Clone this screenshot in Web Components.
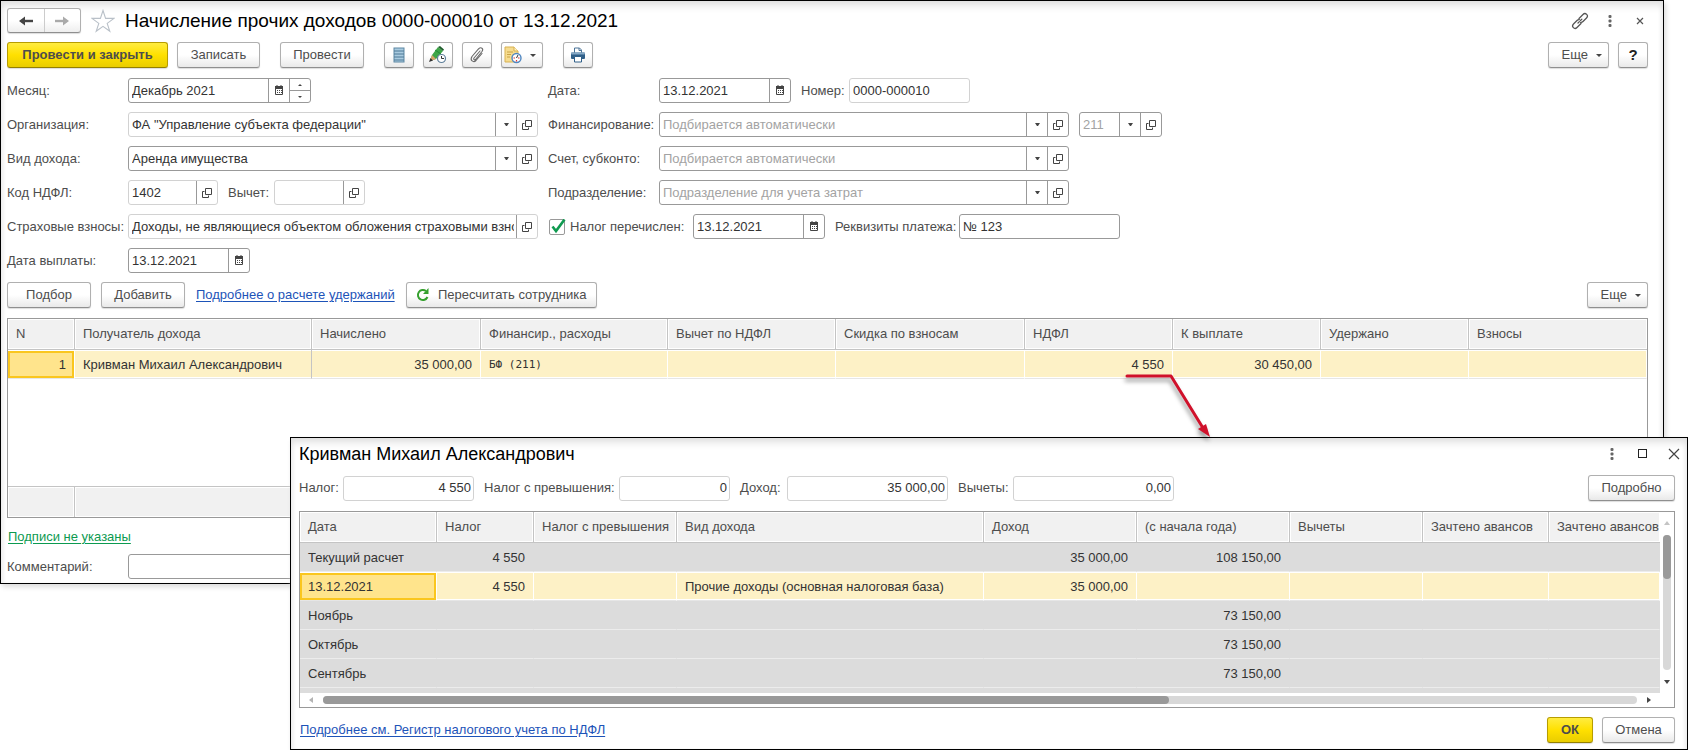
<!DOCTYPE html>
<html lang="ru">
<head>
<meta charset="utf-8">
<title>Начисление прочих доходов</title>
<style>
html,body{margin:0;background:#fff}
body{font:13px/16px "Liberation Sans",Arial,sans-serif;color:#4d4d4d}
</style>
</head>
<body>
<income-page></income-page>
<script>
const ICONS = {
  back: [20,14,'<path d="M5 7h12" stroke="#444" stroke-width="2.400"/><path d="M3 7l6-4.500v9z" fill="#444"/>'],
  forward: [20,14,'<path d="M3 7h12" stroke="#aaa" stroke-width="2.400"/><path d="M17 7l-6-4.500v9z" fill="#aaa"/>'],
  star: [24,24,'<path d="M12 1.500l2.600 7.900h8.400l-6.800 5 2.600 7.900-6.800-4.900-6.800 4.900 2.600-7.900L1 9.400h8.400z" fill="#fff" stroke="#b9c0c8" stroke-width="1.100"/>'],
  link: [18,18,'<g fill="none" stroke="#555" stroke-width="1.300" stroke-linecap="round"><path d="M8 6.500l4-4c2.500-2.500 6 1 3.500 3.500l-3.500 3.500c-.8.800-1.500 1-2.300.9"/><path d="M10 11.500l-4 4c-2.500 2.500-6-1-3.500-3.500L6 8.500c.8-.8 1.500-1 2.300-.9"/><path d="M7 11l4-4" stroke-dasharray="2 1.500"/></g>'],
  dots: [4,12,'<g fill="#666"><rect x=".5" width="3" height="3" rx="1"/><rect x=".5" y="4.500" width="3" height="3" rx="1"/><rect x=".5" y="9" width="3" height="3" rx="1"/></g>'],
  close: [8,8,'<path d="M1 1l6 6M7 1L1 7" stroke="#555" stroke-width="1.200"/>'],
  closeBig: [12,12,'<path d="M1 1l10 10M11 1L1 11" stroke="#444" stroke-width="1.200"/>'],
  max: [9,9,'<rect x=".5" y=".5" width="8" height="8" fill="none" stroke="#222"/>'],
  list: [12,16,'<rect x="1" y="1" width="10" height="14" fill="#a9cbe0" stroke="#5c87a3"/><path d="M1 4h10M1 7h10M1 10h10M1 13h10" stroke="#4d7896"/>'],
  pencil: [18,18,'<path d="M1 15l2-6L9 1l5 4-7 8z" fill="#3fa648"/><path d="M9 1l2-1 4 3.500L14 5z" fill="#1e5c2b"/><path d="M1 15l2-6 4 4z" fill="#d9a36b"/><path d="M0 16l1.500-4L4 14.500z" fill="#333"/><path d="M6 4l6 4" stroke="#25883a"/><circle cx="12.500" cy="12.500" r="4" fill="#fff" stroke="#5e7f99" stroke-width="1.200"/><path d="M12.500 10v2.500H15" fill="none" stroke="#333"/>'],
  clip: [16,18,'<path d="M11 5l-6 7c-1 1.500.5 2.500 1.500 1.500l6.500-8C15 2.500 12 .5 9.500 3L3 10.500c-2.500 4 1.500 6.500 4 4l6-7" fill="none" stroke="#6a6a6a" stroke-width="1.100" stroke-linecap="round"/>'],
  clockDoc: [18,18,'<path d="M1 1h9l4 4v11H1z" fill="#f6dc8f" stroke="#d7b152"/><path d="M10 1v4h4" fill="#fff2c4" stroke="#d7b152"/><path d="M3 6h6M3 8.500h4M3 11h3" stroke="#caa447"/><circle cx="12.500" cy="12" r="4.500" fill="#fff" stroke="#4f86c0" stroke-width="1.400"/><path d="M12.500 12l1.500-3" stroke="#333"/><path d="M9.500 12h1.500M14 12h1.500M12.500 14v1.500" stroke="#d33" stroke-width="1.200"/>'],
  print: [16,16,'<path d="M4.500 6V1h5l2 2v3" fill="#fff" stroke="#4a7397"/><path d="M9 1v2.500h2.500" fill="none" stroke="#4a7397"/><rect x="1" y="5.500" width="14" height="6.500" rx="1" fill="#2f5f88"/><rect x="1" y="5.500" width="14" height="2" rx="1" fill="#86a9c6"/><path d="M4.500 9.500h7v5.500h-7z" fill="#fff" stroke="#2f5f88"/>'],
  refresh: [14,14,'<path d="M10 3A5 5 0 1 0 11.500 9" fill="none" stroke="#35a02e" stroke-width="2"/><path d="M12.500 0v6H7z" fill="#35a02e"/>'],
  down: [6,3,'<path d="M0 0h6L3 3z" fill="#444"/>'],
  calendar: [10,11,'<path d="M1.500 2.500h7v7h-7z" fill="#fff" stroke="#444"/><path d="M1 1h8v3H1z" fill="#444"/><path d="M3 0v1M7 0v1" stroke="#444"/><path d="M3 5.500h5M3 7.500h5" stroke="#444" stroke-dasharray="1 1"/>'],
  open: [10,10,'<path d="M3.500.5h6v6h-6z" fill="none" stroke="#444"/><path d="M2.500 3.500h-2v6h6v-2" fill="none" stroke="#444"/>'],
  drop: [5,3,'<path d="M0 0h5L3 3H2z" fill="#444"/>'],
  up: [4,2,'<path d="M0 2h4L2 0z" fill="#444"/>'],
  dn: [4,2,'<path d="M0 0h4L2 2z" fill="#444"/>'],
  check: [16,16,'<path d="M2.500 7.500L6 12 14.500.5" fill="none" stroke="#109a50" stroke-width="2.600"/>'],
  sUp: [6,4,'<path d="M0 4h6L3 0z" fill="#c4c4c4"/>'],
  sDown: [6,4,'<path d="M0 0h6L3 4z" fill="#444"/>'],
  sLeft: [4,6,'<path d="M4 0v6L0 3z" fill="#b4b4b4"/>'],
  sRight: [4,6,'<path d="M0 0v6l4-3z" fill="#444"/>']
};
const svg = name => {
  const [w,h,body] = ICONS[name];
  return `<svg width="${w}" height="${h}" viewBox="0 0 ${w} ${h}" aria-hidden="true">${body}</svg>`;
};
const define = (tag, render) => customElements.define(tag, class extends HTMLElement {
  connectedCallback() {
    if (this.shadowRoot) return;
    this.attachShadow({mode:'open'}).innerHTML = '<style>*{box-sizing:border-box}svg{display:block;flex:none}</style>' + render(this);
  }
});
const attr = (el, name, fallback='') => el.getAttribute(name) ?? fallback;

define('ui-icon', el => `<style>:host{display:flex;justify-content:center}</style>${svg(attr(el,'name'))}`);

define('ui-button', el => {
  const icon = attr(el,'icon'), menu = el.hasAttribute('menu');
  return `<style>
  :host{display:block;flex:none;width:${attr(el,'width')}px}
  button{display:flex;align-items:center;justify-content:center;gap:8px;width:100%;height:26px;padding:0;
    border:1px solid #b0b0b0;border-bottom-color:#8f8f8f;border-radius:3px;
    background:linear-gradient(#fff 50%,#e9e9e9);box-shadow:0 1px 1px #ddd;font:inherit;color:#4d4d4d;white-space:nowrap}
  :host([menu]) button{justify-content:flex-end;padding-right:6px}
  :host([primary]) button{font-weight:bold;border-color:#b79d00;border-bottom-color:#948000;background:linear-gradient(#ffec40,#ffe000 50%,#e9cd00)}
  :host([strong]) button{font-size:15px;font-weight:bold;color:#222}
  </style><button type="button" ${icon&&!el.textContent?`aria-label="${attr(el,'hint')}"`:''}>${icon?svg(icon):''}<slot></slot>${menu?svg('down'):''}</button>`;
});

define('nav-buttons', () => `<style>
  :host{display:flex;width:74px;height:25px;border:1px solid #b0b0b0;border-bottom-color:#8f8f8f;border-radius:3px;background:linear-gradient(#fff 50%,#eee);box-shadow:0 1px 1px #ddd;box-sizing:border-box}
  button{flex:1;display:flex;align-items:center;justify-content:center;border:0;background:none;padding:0}
  button+button{border-left:1px solid #ccc}
  </style><button type="button" aria-label="Назад">${svg('back')}</button><button type="button" aria-label="Вперед">${svg('forward')}</button>`);

define('ui-link', el => `<style>
  :host{display:block;white-space:nowrap}
  a{color:#1d53b8;text-decoration:underline;text-underline-offset:2px}
  :host([green]) a{color:#0c9a50}
  </style><a href="#"><slot></slot></a>`);

define('ui-field', el => {
  const hints = {calendar:'Выбрать дату',open:'Открыть',drop:'Выбрать'};
  const acts = attr(el,'actions').split(' ').filter(Boolean).map(a => a === 'spin'
    ? `<span class="spin"><button type="button" aria-label="Больше">${svg('up')}</button><button type="button" aria-label="Меньше">${svg('dn')}</button></span>`
    : `<button type="button" aria-label="${hints[a]}">${svg(a)}</button>`).join('');
  const w = attr(el,'width');
  const check = el.hasAttribute('check');
  return `<style>
  :host{display:flex;align-items:center;height:25px;${w?'flex:none':'flex:1'}}
  label{flex:none;width:${attr(el,'label-width')}px;white-space:nowrap}
  .tick{position:relative;width:16px;height:16px;margin:0 5px 0 1px;flex:none}
  .tick input{appearance:none;display:block;width:16px;height:16px;margin:0;border:1px solid #999;border-radius:2px;background:#fff}
  .tick svg{position:absolute;left:1px;top:0;pointer-events:none}
  .box{display:flex;${w?`width:${w}px`:'flex:1'};height:25px;border:1px solid #999;border-radius:3px;background:#fff;overflow:hidden}
  :host([muted]) .box{border-color:#d2d2d2}
  .box>input{flex:1;min-width:0;border:0;outline:0;background:none;padding:0 2px 0 3px;font:inherit;color:#333}
  :host([num]) .box>input{text-align:right}
  input::placeholder{color:#a3a3a3;opacity:1}
  button{flex:none;width:21px;display:flex;align-items:center;justify-content:center;border:0;border-left:1px solid #999;background:none;padding:0}
  .spin{display:flex;flex-direction:column;width:21px;border-left:1px solid #999}
  .spin button{flex:1;width:100%;border:0}
  .spin button+button{border-top:1px solid #999}
  </style>${check?`<span class="tick"><input type="checkbox" id="t" checked>${svg('check')}</span>`:''}<label for="${check?'t':'f'}">${attr(el,'label')}</label>
  <span class="box"><input id="f" type="text" ${attr(el,'label')&&!check?'':`aria-label="${attr(el,'hint')}"`} value="${attr(el,'value').replace(/"/g,'&quot;')}" placeholder="${attr(el,'placeholder')}">${acts}</span>`;
});

define('callout-arrow', () => `<style>
  :host{position:absolute;right:-45px;top:18px;width:92px;height:72px;z-index:3;pointer-events:none}
  svg{overflow:visible;filter:drop-shadow(-1px 4px 2px #0006)}
  </style><svg width="92" height="72" viewBox="0 0 92 72"><path d="M2 8H46L78 60" fill="none" stroke="#d0112b" stroke-width="3" stroke-linejoin="round" stroke-linecap="round"/><path d="M85 69l-12-8 8-5z" fill="#d0112b"/></svg>`);

/* Columns and rows of each data-grid, by its name. Prefix ">" aligns right, "=" sets monospace. */
const GRIDS = {
  income: {
    cols: [['N',67],['Получатель дохода',237],['Начислено',169],['Финансир., расходы',187],['Вычет по НДФЛ',168],['Скидка по взносам',189],['НДФЛ',148],['К выплате',148],['Удержано',148],['Взносы','']],
    rows: [['active',['>1','Кривман Михаил Александрович','>35 000,00','=БФ (211)','','','>4 550<callout-arrow></callout-arrow>','>30 450,00','','']]],
    footer: true
  },
  tax: {
    cols: [['Дата',137],['Налог',97],['Налог с превышения',143],['Вид дохода',307],['Доход',153],['(с начала года)',153],['Вычеты',133],['Зачтено авансов',126],['Зачтено авансов','']],
    rows: [
      ['group',['Текущий расчет','>4 550','','','>35 000,00','>108 150,00','','','']],
      ['active',['13.12.2021','>4 550','','Прочие доходы (основная налоговая база)','>35 000,00','','','','']],
      ['group',['Ноябрь','','','','','>73 150,00','','','']],
      ['group',['Октябрь','','','','','>73 150,00','','','']],
      ['group',['Сентябрь','','','','','>73 150,00','','','']],
      ['group',['','','','','','','','','']]
    ]
  }
};
define('data-grid', el => {
  const g = GRIDS[attr(el,'name')];
  const cell = t => t[0]==='>' ? `<td class="r">${t.slice(1)}</td>` : t[0]==='=' ? `<td class="m">${t.slice(1)}</td>` : `<td>${t}</td>`;
  return `<style>
  :host{display:block;border:1px solid #999;box-sizing:border-box}
  table{width:100%;table-layout:fixed;border-collapse:separate;border-spacing:0}
  :host([name=income]) table{height:198px}
  th,td{padding:0 8px;text-align:left;font-weight:normal;white-space:nowrap;overflow:hidden}
  th{height:31px;padding-right:0;background:#f1f1f1;border-right:1px solid #c4c4c4;border-bottom:1px solid #c4c4c4;box-shadow:inset 0 0 0 1px #fff}
  th:last-child{border-right:0}
  td{position:relative;overflow:visible}
  .r{text-align:right}
  .m{font:11px/16px "DejaVu Sans Mono",monospace}
  tr.active td,tr.group td{height:29px;padding-top:2px;color:#333}
  tr.group td{background:#dcdcdc;border-right:1px solid #dcdcdc;border-bottom:1px solid #ececec}
  tr.active td{background:#fdf1c6;border-right:1px solid #fff;border-bottom:1px solid #e6e6e6;box-shadow:inset 0 1px #fff,inset 0 -1px #fff}
  :host([name=income]) tr.active td:nth-child(2){border-right-color:#c4c4c4}
  tr.active td:first-child{background:#ffe48c;box-shadow:inset 0 1px #fff,inset 2px 0 #fac61e,inset -2px 0 #fac61e,inset 0 3px #fac61e,inset 0 -2px #fac61e}
  tr.fill td{height:auto}
  tfoot td{height:31px;background:#f1f1f1;border-top:1px solid #c4c4c4;border-right:1px solid #c4c4c4;box-shadow:inset 0 0 0 1px #fff}
  tfoot td:last-child{border-right:0}
  .view{display:flex}
  .port{flex:1;min-width:0;height:181px;overflow:hidden}
  .vbar{width:14px;display:flex;flex-direction:column;align-items:center;padding:9px 0}
  .vtrack{width:8px;flex:1;margin:10px 0;border-radius:4px;background:#d8d8d8}
  .vthumb{height:44px;border-radius:4px;background:#999}
  .hbar{height:14px;display:flex;align-items:center;padding:0 23px 0 9px}
  .htrack{height:8px;flex:1;margin:0 10px;border-radius:4px;background:#d8d8d8}
  .hthumb{width:64.4%;height:8px;border-radius:4px;background:#999}
  </style>
  ${g.footer?'':'<div class="view"><div class="port">'}
  <table><colgroup>${g.cols.map(c=>`<col${c[1]?` style="width:${c[1]}px"`:''}>`).join('')}</colgroup>
  <thead><tr>${g.cols.map(c=>`<th scope="col">${c[0]}</th>`).join('')}</tr></thead>
  <tbody>${g.rows.map(([k,r])=>`<tr class="${k}">${r.map(cell).join('')}</tr>`).join('')}
  ${g.footer?`<tr class="fill"><td colspan="${g.cols.length}"></td></tr>`:''}</tbody>
  ${g.footer?`<tfoot><tr>${g.cols.map(()=>'<td></td>').join('')}</tr></tfoot>`:''}</table>
  ${g.footer?'':`</div><div class="vbar">${svg('sUp')}<div class="vtrack"><div class="vthumb"></div></div>${svg('sDown')}</div></div>
  <div class="hbar">${svg('sLeft')}<div class="htrack"><div class="hthumb"></div></div>${svg('sRight')}</div>`}`;
});

define('app-window', () => `<style>
  :host{display:block;box-sizing:border-box;border:1px solid #000;background:#fff;box-shadow:inset 0 8px 8px -4px #ddd,inset 4px 0 4px -2px #eee,inset -4px 0 4px -2px #eee,2px 3px 5px #ddd}
  header{display:flex;align-items:center;gap:10px;height:25px}
  h1{margin:0;font-size:var(--title-size,19px);line-height:24px;font-weight:normal;color:#000;white-space:nowrap}
  .tools{margin-left:auto;display:flex;align-items:center}
  </style><header><slot name="lead"></slot><h1><slot name="title"></slot></h1><div class="tools"><slot name="tools"></slot></div></header><slot></slot>`);

define('income-document', () => `<style>
  :host{display:block}
  app-window{padding:7px 15px 4px 6px}
  .bar{display:flex;align-items:center;gap:9px}
  .top{margin:9px 0 10px}
  .push{margin-left:auto}
  .gap{margin-left:11px}
  .tools{display:flex;align-items:center;margin-right:-7px}
  .tools ui-icon{width:30px}
  .form{display:grid;grid-template-columns:531px 1fr;column-gap:10px;row-gap:9px}
  .row{display:flex;gap:10px}
  .cmd{margin:9px 0 10px;gap:10px}
  .cmd ui-link{margin:0 1px}
  .sign{margin:11px 0 9px 1px}
  </style>
  <app-window>
    <nav-buttons slot="lead"></nav-buttons><ui-icon slot="lead" name="star"></ui-icon>
    <span slot="title">Начисление прочих доходов 0000-000010 от 13.12.2021</span>
    <div slot="tools" class="tools"><ui-icon name="link"></ui-icon><ui-icon name="dots"></ui-icon><ui-icon name="close"></ui-icon></div>
    <div class="bar top">
      <ui-button width="161" primary>Провести и закрыть</ui-button><ui-button width="83">Записать</ui-button>
      <ui-button width="84" class="gap">Провести</ui-button>
      <ui-button width="30" icon="list" hint="Проводки" class="gap"></ui-button><ui-button width="30" icon="pencil" hint="Изменить"></ui-button>
      <ui-button width="30" icon="clip" hint="Файлы"></ui-button><ui-button width="42" icon="clockDoc" hint="Создать на основании" menu></ui-button>
      <ui-button width="30" icon="print" hint="Печать" class="gap"></ui-button>
      <ui-button width="61" menu class="push">Еще</ui-button><ui-button width="30" strong>?</ui-button>
    </div>
    <div class="form">
      <div class="row"><ui-field label="Месяц:" label-width="121" width="183" value="Декабрь 2021" actions="calendar spin"></ui-field></div>
      <div class="row"><ui-field label="Дата:" label-width="111" width="132" value="13.12.2021" actions="calendar"></ui-field><ui-field label="Номер:" label-width="48" width="121" value="0000-000010" muted></ui-field></div>
      <div class="row"><ui-field label="Организация:" label-width="121" value='ФА "Управление субъекта федерации"' actions="drop open" muted></ui-field></div>
      <div class="row"><ui-field label="Финансирование:" label-width="111" width="410" placeholder="Подбирается автоматически" actions="drop open"></ui-field><ui-field label-width="0" width="83" hint="Расходы" placeholder="211" actions="drop open"></ui-field></div>
      <div class="row"><ui-field label="Вид дохода:" label-width="121" value="Аренда имущества" actions="drop open"></ui-field></div>
      <div class="row"><ui-field label="Счет, субконто:" label-width="111" width="410" placeholder="Подбирается автоматически" actions="drop open"></ui-field></div>
      <div class="row"><ui-field label="Код НДФЛ:" label-width="121" width="90" value="1402" actions="open" muted></ui-field><ui-field label="Вычет:" label-width="46" width="91" actions="open" muted></ui-field></div>
      <div class="row"><ui-field label="Подразделение:" label-width="111" width="410" placeholder="Подразделение для учета затрат" actions="drop open"></ui-field></div>
      <div class="row"><ui-field label="Страховые взносы:" label-width="121" value="Доходы, не являющиеся объектом обложения страховыми взносами" actions="open" muted></ui-field></div>
      <div class="row"><ui-field check label="Налог перечислен:" label-width="123" width="132" hint="Дата перечисления" value="13.12.2021" actions="calendar"></ui-field><ui-field label="Реквизиты платежа:" label-width="124" width="161" value="№ 123"></ui-field></div>
      <div class="row"><ui-field label="Дата выплаты:" label-width="121" width="122" value="13.12.2021" actions="calendar"></ui-field></div>
    </div>
    <div class="bar cmd">
      <ui-button width="84">Подбор</ui-button><ui-button width="84">Добавить</ui-button>
      <ui-link>Подробнее о расчете удержаний</ui-link>
      <ui-button width="191" icon="refresh">Пересчитать сотрудника</ui-button>
      <ui-button width="61" menu class="push">Еще</ui-button>
    </div>
    <data-grid name="income"></data-grid>
    <ui-link green class="sign">Подписи не указаны</ui-link>
    <ui-field label="Комментарий:" label-width="121"></ui-field>
  </app-window>`);

define('tax-dialog', () => `<style>
  :host{display:block;--title-size:18px}
  app-window{padding:3px 12px 6px 8px}
  .tools{display:flex;align-items:center;margin-right:-14px}
  .tools ui-icon{width:31px}
  .row{display:flex;align-items:center;gap:10px;margin:9px 0 10px}
  .push{margin-left:auto}
  .foot{display:flex;align-items:center;gap:9px;margin-top:9px}
  ui-link{margin-left:1px}
  </style>
  <app-window>
    <span slot="title">Кривман Михаил Александрович</span>
    <div slot="tools" class="tools"><ui-icon name="dots"></ui-icon><ui-icon name="max"></ui-icon><ui-icon name="closeBig"></ui-icon></div>
    <div class="row">
      <ui-field label="Налог:" label-width="44" width="131" value="4 550" num muted></ui-field>
      <ui-field label="Налог с превышения:" label-width="135" width="111" value="0" num muted></ui-field>
      <ui-field label="Доход:" label-width="47" width="161" value="35 000,00" num muted></ui-field>
      <ui-field label="Вычеты:" label-width="55" width="161" value="0,00" num muted></ui-field>
      <ui-button width="87" class="push">Подробно</ui-button>
    </div>
    <data-grid name="tax"></data-grid>
    <div class="foot"><ui-link>Подробнее см. Регистр налогового учета по НДФЛ</ui-link><ui-button width="46" primary class="push">ОК</ui-button><ui-button width="73">Отмена</ui-button></div>
  </app-window>`);

define('income-page', () => `<style>
  :host{display:block;position:relative;min-height:750px}
  income-document{margin-right:24px}
  tax-dialog{position:absolute;left:290px;right:0;top:437px}
  </style><income-document></income-document><tax-dialog></tax-dialog>`);
</script>
</body>
</html>
